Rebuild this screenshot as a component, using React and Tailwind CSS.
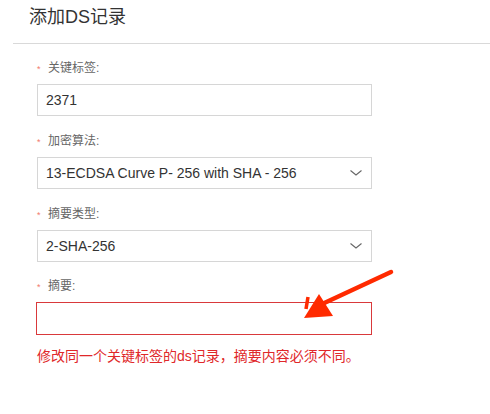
import React from "react";

const font = { fontFamily: '"Liberation Sans", "Noto Sans CJK SC", sans-serif' };

function Label({ text }) {
  return (
    <div className="flex items-center h-4 mb-2 text-[12px] text-[#666]">
      <span className="w-[11px] text-[9px] text-[#f27a6c] leading-none pt-[2px]">*</span>
      <span>{text}</span>
    </div>
  );
}

function Chevron() {
  return (
    <svg width="14" height="8" viewBox="0 0 14 8" className="absolute right-[8px] top-1/2 -translate-y-1/2">
      <path d="M1.5 1.5 L7 6 L12.5 1.5" fill="none" stroke="#666" strokeWidth="1.1" />
    </svg>
  );
}

function Select({ value }) {
  return (
    <div className="relative h-[32px] w-[335px] border border-[#d6d6d6] bg-white flex items-center pl-[8px] text-[14px] text-[#333]">
      {value}
      <Chevron />
    </div>
  );
}

export default function App() {
  return (
    <div className="relative w-[490px] h-[414px] bg-white overflow-hidden" style={font}>
      {/* header */}
      <div className="h-[43px] pl-[29px] pt-[5px] text-[18px] text-[#333] leading-[24px]">
        添加DS记录
      </div>
      <div className="ml-[13px] h-px bg-[#d9d9d9]" />

      {/* form */}
      <div className="pl-[37px] pt-[16px]">
        <Label text="关键标签:" />
        <div className="h-[32px] w-[335px] border border-[#d6d6d6] flex items-center pl-[8px] text-[14px] text-[#333]">
          2371
        </div>

        <div className="mt-[17px]">
          <Label text="加密算法:" />
          <Select value="13-ECDSA Curve P- 256 with SHA - 256" />
        </div>

        <div className="mt-[17px]">
          <Label text="摘要类型:" />
          <Select value="2-SHA-256" />
        </div>

        <div className="mt-[16px]">
          <Label text="摘要:" />
          <div className="h-[33px] w-[336px] -ml-px border border-[#d9393b]" />
        </div>

        <div className="mt-[11px] text-[14px] leading-[20px] text-[#e0282a]">
          修改同一个关键标签的ds记录，摘要内容必须不同。
        </div>
      </div>

      {/* annotation arrow */}
      <svg className="absolute left-0 top-0" width="490" height="414" viewBox="0 0 490 414">
        <line x1="391" y1="272" x2="320" y2="305" stroke="#ff2a00" strokeWidth="4.5" strokeLinecap="round" />
        <polygon points="304,318 319,294 333,316" fill="#ff2a00" />
        <line x1="308" y1="297" x2="306" y2="309" stroke="#ff2a00" strokeWidth="3.5" />
      </svg>
    </div>
  );
}
